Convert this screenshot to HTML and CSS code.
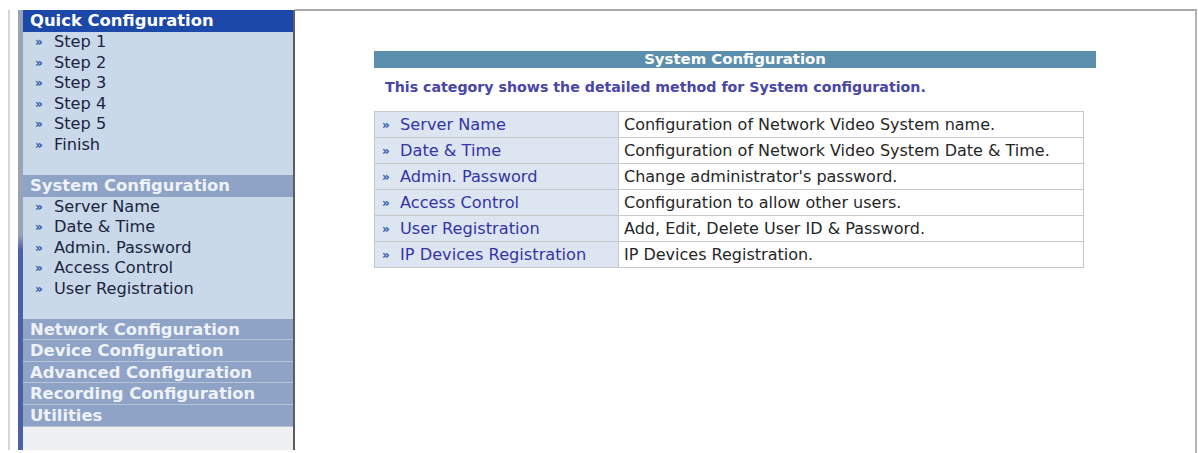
FILE: index.html
```html
<!DOCTYPE html>
<html>
<head>
<meta charset="utf-8">
<title>System Configuration</title>
<link rel="stylesheet" href="styles.css">
</head>
<body>
<div class="page">
  <aside class="sidebar">
    <div class="rail"></div>
    <nav class="panel">
      <div class="sec-head active">Quick Configuration</div>
      <ul class="items">
        <li><span class="arr">»</span>Step 1</li>
        <li><span class="arr">»</span>Step 2</li>
        <li><span class="arr">»</span>Step 3</li>
        <li><span class="arr">»</span>Step 4</li>
        <li><span class="arr">»</span>Step 5</li>
        <li><span class="arr">»</span>Finish</li>
      </ul>
      <div class="sec-head">System Configuration</div>
      <ul class="items">
        <li><span class="arr">»</span>Server Name</li>
        <li><span class="arr">»</span>Date &amp; Time</li>
        <li><span class="arr">»</span>Admin. Password</li>
        <li><span class="arr">»</span>Access Control</li>
        <li><span class="arr">»</span>User Registration</li>
      </ul>
      <div class="sec-head collapsed">Network Configuration</div>
      <div class="sec-head collapsed">Device Configuration</div>
      <div class="sec-head collapsed">Advanced Configuration</div>
      <div class="sec-head collapsed">Recording Configuration</div>
      <div class="sec-head collapsed">Utilities</div>
      <div class="filler"></div>
    </nav>
  </aside>
  <main class="main">
    <div class="content">
      <div class="title-bar">System Configuration</div>
      <p class="desc">This category shows the detailed method for System configuration.</p>
      <table class="cfg">
        <tr><td class="name"><span class="arr">»</span>Server Name</td><td class="info">Configuration of Network Video System name.</td></tr>
        <tr><td class="name"><span class="arr">»</span>Date &amp; Time</td><td class="info">Configuration of Network Video System Date &amp; Time.</td></tr>
        <tr><td class="name"><span class="arr">»</span>Admin. Password</td><td class="info">Change administrator's password.</td></tr>
        <tr><td class="name"><span class="arr">»</span>Access Control</td><td class="info">Configuration to allow other users.</td></tr>
        <tr><td class="name"><span class="arr">»</span>User Registration</td><td class="info">Add, Edit, Delete User ID &amp; Password.</td></tr>
        <tr><td class="name"><span class="arr">»</span>IP Devices Registration</td><td class="info">IP Devices Registration.</td></tr>
      </table>
    </div>
  </main>
</div>
</body>
</html>
```

FILE: styles.css
```css
* { box-sizing: border-box; }
html, body { margin: 0; padding: 0; background: #ffffff; }
body {
  font-family: "DejaVu Sans", Verdana, sans-serif;
  font-size: 16.2px;
  color: #1c2440;
  width: 1198px;
  height: 453px;
  overflow: hidden;
}
.page {
  display: flex;
  align-items: flex-start;
  padding-top: 9px;
  padding-left: 8px;
}
.sidebar {
  display: flex;
  margin-top: 1px;
  height: 440px;
  border-left: 2px solid #d6d6d6;
  padding-left: 8px;
  flex: none;
}
.rail {
  width: 5px;
  background: linear-gradient(#9aa3b6 0, #9aa3b6 225px, #4d60a6 240px, #4d60a6 100%);
}
.panel {
  width: 272px;
  display: flex;
  flex-direction: column;
  background: #c9d9ea;
  border-right: 2px solid #5e5e5e;
}
.sec-head {
  font-weight: bold;
  font-size: 16.4px;
  line-height: 22px;
  height: 22px;
  padding-left: 7px;
  background: #8ea3c6;
  color: #eef2f9;
  white-space: nowrap;
}
.sec-head.active {
  background: #1b48a9;
  color: #ffffff;
}
.sec-head.collapsed {
  height: 21.6px;
  line-height: 21px;
  border-bottom: 1px solid #b6c4da;
}
.items {
  list-style: none;
  margin: 0;
  padding: 0 0 19px 12px;
}
.items li {
  line-height: 20.6px;
  height: 20.6px;
  white-space: nowrap;
}
.arr {
  display: inline-block;
  width: 19px;
  font-size: 12px;
  font-weight: bold;
  color: #2a56a8;
  vertical-align: 1px;
}
.filler {
  flex: 1;
  background: #eef0f3;
}
.main {
  flex: 1;
  height: 444px;
  margin-right: 1px;
  border-top: 2px solid #a9a9a9;
  border-right: 2px solid #b5b5b5;
}
.content {
  padding: 40px 0 0 79px;
}
.title-bar {
  width: 722px;
  height: 17px;
  line-height: 17px;
  background: #5b8fad;
  color: #ffffff;
  font-weight: bold;
  font-size: 14.9px;
  text-align: center;
}
.desc {
  margin: 0;
  padding: 10px 0 0 11px;
  height: 43px;
  line-height: 18px;
  font-weight: bold;
  font-size: 14.2px;
  color: #4846a6;
  white-space: nowrap;
}
.cfg {
  width: 710px;
  border-collapse: collapse;
  border: 1px solid #c4c4c4;
}
.cfg td {
  height: 26px;
  padding: 0 5px;
  border: 1px solid #c8c8c8;
  white-space: nowrap;
}
.cfg td.name {
  width: 244px;
  background: #dde6f0;
  color: #3434a4;
  padding-left: 7px;
}
.cfg td.info {
  background: #ffffff;
  color: #262626;
  font-size: 16px;
}
.cfg .arr {
  width: 18px;
}
```
